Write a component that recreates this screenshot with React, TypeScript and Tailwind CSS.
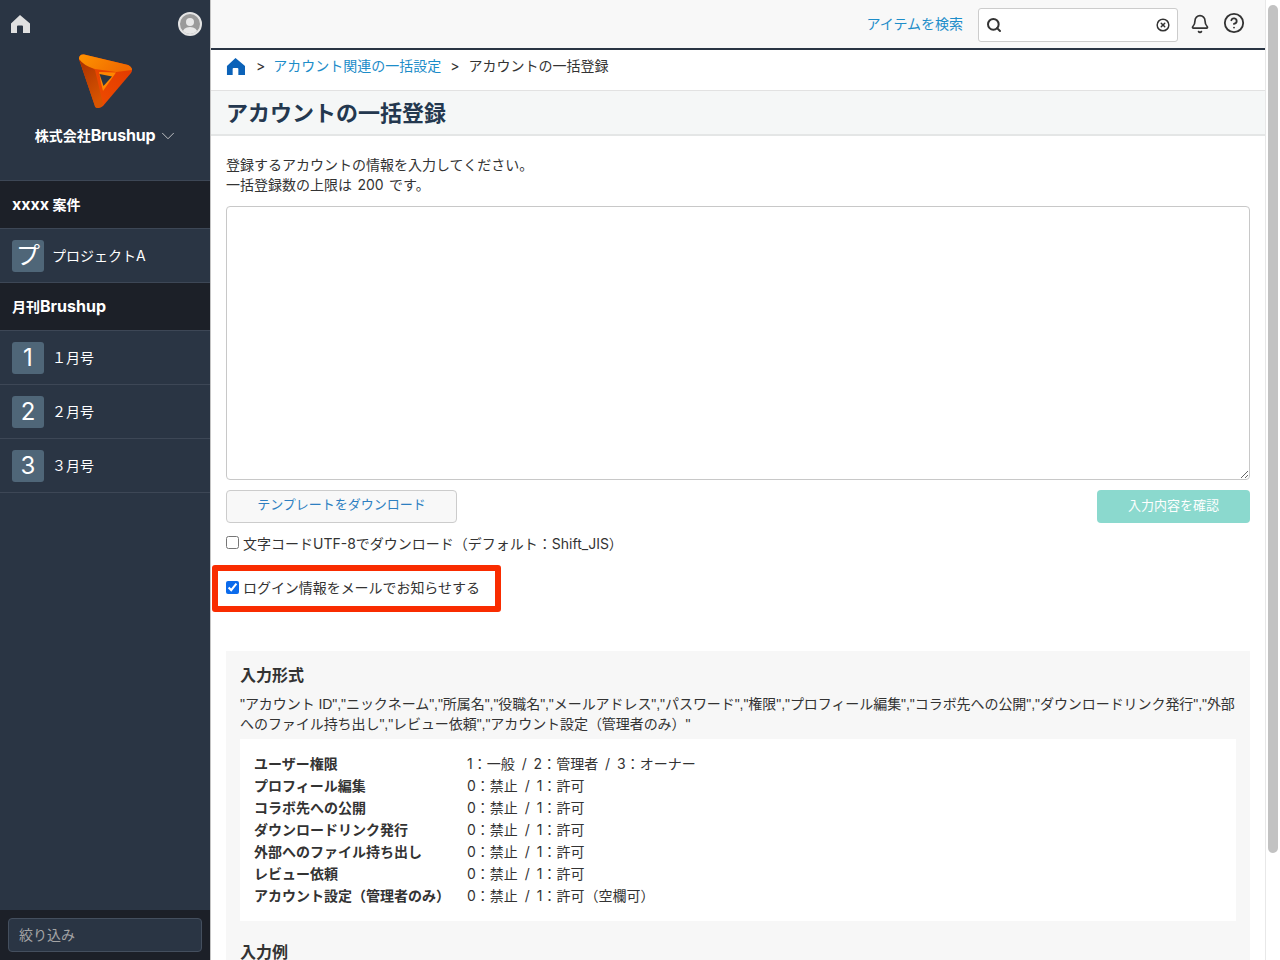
import type { ReactNode } from "react";
import { ChevronDown, Search, Bell, CircleHelp, CircleX } from "lucide-react";

const font = { fontFamily: 'Inter, "Noto Sans CJK JP", sans-serif' };

const rules = [
  ["ユーザー権限", "1：一般 / 2：管理者 / 3：オーナー"],
  ["プロフィール編集", "0：禁止 / 1：許可"],
  ["コラボ先への公開", "0：禁止 / 1：許可"],
  ["ダウンロードリンク発行", "0：禁止 / 1：許可"],
  ["外部へのファイル持ち出し", "0：禁止 / 1：許可"],
  ["レビュー依頼", "0：禁止 / 1：許可"],
  ["アカウント設定（管理者のみ）", "0：禁止 / 1：許可（空欄可）"],
];

function HomeIcon({ size, color }: { size: number; color: string }) {
  return (
    <svg width={size} height={size} viewBox="0 0 20 20">
      <path
        fill={color}
        fillRule="evenodd"
        d="M10 1 L20 9.500 V19 H13 V12.500 Q13 11.500 12 11.500 H8 Q7 11.500 7 12.500 V19 H1 V9.500 Z"
      />
    </svg>
  );
}

function Logo() {
  return (
    <svg width="72" height="66" viewBox="0 0 72 66">
      <defs>
        <linearGradient id="top" x1="0" y1="0" x2="1" y2="0.300">
          <stop offset="0" stopColor="#ff9400" />
          <stop offset="1" stopColor="#f06a00" />
        </linearGradient>
        <linearGradient id="left" x1="0" y1="0" x2="0.500" y2="1">
          <stop offset="0" stopColor="#a93000" />
          <stop offset="1" stopColor="#d85400" />
        </linearGradient>
        <linearGradient id="right" x1="1" y1="0" x2="0" y2="1">
          <stop offset="0" stopColor="#e03800" />
          <stop offset="1" stopColor="#f25000" />
        </linearGradient>
      </defs>
      <path d="M9 11 Q9 6 14 6.500 L58 17 Q64 20 61 25 L33 58 Q28 62 25 58 Z" fill="url(#right)" />
      <path d="M9 11 L25 22 L33 56 Q30 60 27 60 Q25 60 24.500 57 Z" fill="url(#left)" />
      <path d="M9 11 Q9 6 14 6.500 L58 17 Q62 19 62 22 L46 24 L25 21 Q14 18 9 11 Z" fill="url(#top)" />
      <path d="M29 24 L46 24.500 L33 43 L31 35 Z" fill="#ff8600" />
      <path d="M29.500 26 L42 28.500 L33.500 38 Z" fill="#2a3544" />
    </svg>
  );
}

function NavHeader({ children }: { children: ReactNode }) {
  return (
    <div className="h-12 flex items-center px-3 pb-[2px] bg-[#1c2028] border-b border-[#3d4756] text-[14px] font-bold text-white">
      <span>{children}</span>
    </div>
  );
}

function NavItem({ badge, label }: { badge: string; label: string }) {
  return (
    <div className="h-[54px] flex items-center px-3 gap-2 border-b border-[#3d4756]">
      <div className="w-8 h-8 rounded-[3px] bg-[#4f6678] text-white text-[24px] flex items-center justify-center">
        {badge}
      </div>
      <span className="text-[14px] text-white">{label}</span>
    </div>
  );
}

export default function App() {
  return (
    <div style={font} className="relative flex h-[960px] w-[1280px] overflow-hidden bg-white text-[14px] text-[#333]">
      {/* Sidebar */}
      <div className="w-[211px] shrink-0 flex flex-col bg-[#2a3544] border-r border-[#c4c4c4]">
        <div className="h-[181px] shrink-0 border-b border-[#3d4756] flex flex-col">
          <div className="h-[36px] flex items-center justify-between pl-[10px] pr-2 pt-3">
            <HomeIcon size={20} color="#e0e0e0" />
            <div className="w-6 h-6 rounded-full bg-[#9a9a9a] border-2 border-[#e4e4e4] flex items-end justify-center overflow-hidden">
              <svg width="16" height="18" viewBox="0 0 16 18">
                <circle cx="8" cy="6" r="4" fill="#e8e8e8" />
                <path d="M0 18 Q1 11 8 11 Q15 11 16 18 Z" fill="#e8e8e8" />
              </svg>
            </div>
          </div>
          <div className="flex justify-center pt-[12px] pl-[2px]">
            <Logo />
          </div>
          <div className="flex items-center justify-center gap-[5px] mt-[10px] pl-[1px] text-white font-bold text-[14px] leading-[22px]">
            <span>
              株式会社<span className="text-[16px] tracking-[-0.2px]">Brushup</span>
            </span>
            <ChevronDown size={22} strokeWidth={0.900} className="text-[#ddd] -mx-[3px]" />
          </div>
        </div>
        <NavHeader>
          <span className="text-[16px]">xxxx</span> 案件
        </NavHeader>
        <NavItem badge="プ" label="プロジェクトA" />
        <NavHeader>
          月刊<span className="text-[16px]">Brushup</span>
        </NavHeader>
        <NavItem badge="1" label="１月号" />
        <NavItem badge="2" label="２月号" />
        <NavItem badge="3" label="３月号" />
        <div className="flex-1" />
        <div className="h-[50px] bg-[#1c2028] px-2 flex items-center">
          <div className="w-full h-[34px] rounded-[4px] border border-[#444f5e] bg-[#2a3544] px-[10px] flex items-center pb-[2px] text-[#a4a4a4] text-[14px]">
            絞り込み
          </div>
        </div>
      </div>

      {/* Main */}
      <div className="w-[1054px] shrink-0 flex flex-col">
        <div className="h-[50px] shrink-0 bg-[#f8f8f8] border-b-2 border-[#2a3544] flex items-center justify-end pr-[20px]">
          <span className="text-[14px] text-[#1d8dc9] mr-[15px] -mt-[2px]">アイテムを検索</span>
          <div className="w-[200px] h-[34px] bg-white border border-[#ccc] rounded-[3px] flex items-center justify-between px-[7px] mr-[12px] mt-[2px]">
            <Search size={16} strokeWidth={3} className="text-[#333]" />
            <CircleX size={14} strokeWidth={2.500} className="text-[#333]" />
          </div>
          <Bell size={20} strokeWidth={2} className="text-[#333] mr-[13px]" />
          <CircleHelp size={22} strokeWidth={2} className="text-[#333] -mt-[2px]" />
        </div>

        <div className="h-[41px] shrink-0 border-b border-[#e2e2e2] flex items-start pt-[5px] pl-[15px] text-[14px]">
          <span className="mt-[2px]">
            <HomeIcon size={19} color="#0b62b8" />
          </span>
          <span className="ml-[11px] mr-[8px]">&gt;</span>
          <span className="text-[#1d8dc9]">アカウント関連の一括設定</span>
          <span className="ml-[9px] mr-[9px]">&gt;</span>
          <span>アカウントの一括登録</span>
        </div>

        <div className="h-[45px] shrink-0 bg-[#f5f7f7] border-b-2 border-[#e4e6e6] flex items-center pl-[15px] pt-[2px] text-[22px] font-bold text-[#24384f]">
          アカウントの一括登録
        </div>

        <div className="pl-[15px] pr-[15px] pt-[19px]">
          <p className="leading-[20px] [word-spacing:1.5px]">
            登録するアカウントの情報を入力してください。
            <br />
            一括登録数の上限は 200 です。
          </p>
          <textarea className="block mt-[11px] w-full h-[274px] bg-white border border-[#c8c8c8] rounded-[4px]" />
          <div className="flex justify-between mt-[10px]">
            <div className="w-[231px] h-[33px] rounded-[4px] border border-[#ccc] bg-[#f8f8f8] flex items-center justify-center pb-[3px] text-[13px] text-[#2d7fc1]">
              テンプレートをダウンロード
            </div>
            <div className="w-[153px] h-[33px] rounded-[4px] bg-[#8bd9ce] flex items-center justify-center pb-[2px] text-[13px] text-white">
              入力内容を確認
            </div>
          </div>
          <label className="flex items-center gap-[4px] mt-[10px] h-[20px]">
            <input type="checkbox" className="w-[13px] h-[13px] m-0 -mt-[2px]" />
            <span className="[word-spacing:2px]">文字コードUTF-8でダウンロード（デフォルト：Shift_JIS）</span>
          </label>
          <div className="flex items-center gap-[4px] -ml-[14px] mt-[12px] w-[289px] h-[47px] pl-[8px] border-[6px] border-[#f92c00] rounded-[3px]">
            <input type="checkbox" defaultChecked className="w-[13px] h-[13px] m-0 -mt-[2px] accent-[#0b6bec]" />
            <span className="-mt-[2px] tracking-[-0.05px]">ログイン情報をメールでお知らせする</span>
          </div>

          <div className="mt-[39px] bg-[#f7f7f7] px-[14px] pt-[13px] pb-4">
            <h3 className="text-[16px] font-bold leading-[22px]">入力形式</h3>
            <p className="mt-[8px] leading-[20px] tracking-[-0.06px] [font-family:'Liberation_Sans','Noto_Sans_CJK_JP',sans-serif]">
              "アカウント ID","ニックネーム","所属名","役職名","メールアドレス","パスワード","権限","プロフィール編集","コラボ先への公開","ダウンロードリンク発行","外部へのファイル持ち出し","レビュー依頼","アカウント設定（管理者のみ）"
            </p>
            <div className="mt-[5px] bg-white px-[14px] pt-[13px] pb-[15px]">
              {rules.map(([k, v]) => (
                <div key={k} className="flex h-[22px] items-center">
                  <span className="w-[213px] font-bold">{k}</span>
                  <span className="[word-spacing:3px]">{v}</span>
                </div>
              ))}
            </div>
            <h3 className="mt-5 text-[16px] font-bold leading-[22px]">入力例</h3>
          </div>
        </div>
      </div>

      {/* Scrollbar */}
      <div className="flex-1 bg-white border-l border-[#e8e8e8] px-[2px] pt-[5px]">
        <div className="w-[10px] h-[848px] rounded-[5px] bg-[#c2c2c2]" />
      </div>
    </div>
  );
}
